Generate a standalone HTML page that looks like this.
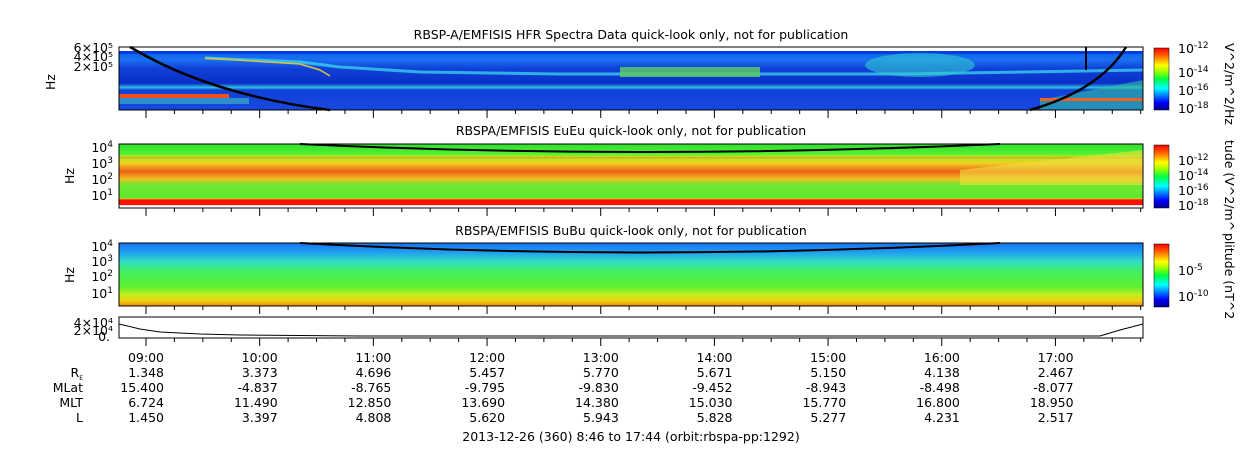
<!DOCTYPE html>
<html><head><meta charset="utf-8"><style>
body{margin:0;background:#fff;width:1250px;height:449px;overflow:hidden;font-family:"Liberation Sans","DejaVu Sans",sans-serif}
svg text{font-family:"DejaVu Sans","Liberation Sans",sans-serif;font-size:12.5px;fill:#000}
</style></head><body>
<svg id="s" width="1250" height="449" xmlns="http://www.w3.org/2000/svg">
<defs>
<linearGradient id="jet" x1="0" y1="1" x2="0" y2="0">
<stop offset="0" stop-color="#00008f"/><stop offset="0.12" stop-color="#0000ff"/><stop offset="0.35" stop-color="#00ffff"/><stop offset="0.5" stop-color="#00ff40"/><stop offset="0.62" stop-color="#a0ff00"/><stop offset="0.72" stop-color="#ffff00"/><stop offset="0.88" stop-color="#ff6000"/><stop offset="1" stop-color="#ff0000"/>
</linearGradient>
<linearGradient id="p1" x1="0" y1="0" x2="0" y2="1">
<stop offset="0" stop-color="#1060f0"/><stop offset="0.15" stop-color="#1870f0"/><stop offset="0.3" stop-color="#1040d8"/><stop offset="0.55" stop-color="#0a30c8"/><stop offset="0.62" stop-color="#30c0e0"/><stop offset="0.66" stop-color="#1040d8"/><stop offset="1" stop-color="#1848e0"/>
</linearGradient>
<linearGradient id="p2" x1="0" y1="0" x2="0" y2="1">
<stop offset="0" stop-color="#30e030"/><stop offset="0.15" stop-color="#50f030"/><stop offset="0.2" stop-color="#a0f020"/><stop offset="0.3" stop-color="#f0d020"/><stop offset="0.43" stop-color="#f06018"/><stop offset="0.55" stop-color="#f0c020"/><stop offset="0.63" stop-color="#70e830"/><stop offset="0.84" stop-color="#60e830"/><stop offset="0.86" stop-color="#f0c020"/><stop offset="0.87" stop-color="#ff1000"/><stop offset="0.95" stop-color="#ff1000"/><stop offset="0.96" stop-color="#ffffff"/><stop offset="1" stop-color="#ffffff"/>
</linearGradient>
<linearGradient id="p3" x1="0" y1="0" x2="0" y2="1">
<stop offset="0" stop-color="#1870f0"/><stop offset="0.15" stop-color="#20a0f0"/><stop offset="0.3" stop-color="#30e0c0"/><stop offset="0.45" stop-color="#40f060"/><stop offset="0.7" stop-color="#60f030"/><stop offset="0.82" stop-color="#c0f020"/><stop offset="0.92" stop-color="#f0d010"/><stop offset="1" stop-color="#f08010"/>
</linearGradient>
</defs>
<text x="631" y="39" text-anchor="middle">RBSP-A/EMFISIS  HFR Spectra Data quick-look only, not for publication</text>
<text x="631" y="135" text-anchor="middle">RBSPA/EMFISIS  EuEu quick-look only, not for publication</text>
<text x="631" y="235" text-anchor="middle">RBSPA/EMFISIS  BuBu quick-look only, not for publication</text>
<rect x="119" y="51" width="1024" height="59" fill="url(#p1)"/>
<rect x="119" y="51" width="1024" height="3" fill="#0040e0"/>
<path d="M205 58 L300 62 L340 67 L420 72 L560 74 L900 74 L1143 70" stroke="#40e0f0" stroke-width="3" fill="none" opacity=".7"/>
<path d="M205 58 L300 64 L320 70 L330 76" stroke="#e0c040" stroke-width="1.5" fill="none"/>
<rect x="620" y="67" width="140" height="10" fill="#60d060" opacity=".8"/>
<ellipse cx="920" cy="65" rx="55" ry="12" fill="#30c8d0" opacity=".6"/>
<rect x="119" y="94" width="110" height="4" fill="#f05020"/>
<rect x="119" y="98" width="130" height="6" fill="#40c0c0" opacity=".6"/>
<path d="M1040 100 L1143 80 L1143 110 L1040 110Z" fill="#30c0a0" opacity=".6"/>
<rect x="1040" y="98" width="103" height="3" fill="#f06020"/>
<path d="M130 47 Q210 95 330 110" stroke="#000" stroke-width="2.5" fill="none"/>
<path d="M1030 110 Q1100 90 1126 47" stroke="#000" stroke-width="2.5" fill="none"/>
<line x1="1086" y1="47" x2="1086" y2="70" stroke="#000" stroke-width="2"/>
<rect x="119" y="47" width="1024" height="63" fill="none" stroke="#000" stroke-width="1"/>
<text x="113" y="52" text-anchor="end" font-size="11">6×10⁵</text>
<text x="113" y="61" text-anchor="end" font-size="11">4×10⁵</text>
<text x="113" y="71" text-anchor="end" font-size="11">2×10⁵</text>
<text transform="translate(55,82) rotate(-90)" text-anchor="middle">Hz</text>
<rect x="119" y="144" width="1024" height="64" fill="url(#p2)"/>
<rect x="119" y="157" width="1024" height="1.5" fill="#f0a020"/>
<path d="M960 170 L1143 150 L1143 185 L960 185Z" fill="#f0e040" opacity=".6"/>
<path d="M300 144 Q640 160 1000 144" stroke="#000" stroke-width="2" fill="none"/>
<rect x="119" y="144" width="1024" height="64" fill="none" stroke="#000"/>
<text x="113" y="152" text-anchor="end">10<tspan font-size="9" dy="-5">4</tspan></text>
<text x="113" y="168" text-anchor="end">10<tspan font-size="9" dy="-5">3</tspan></text>
<text x="113" y="184" text-anchor="end">10<tspan font-size="9" dy="-5">2</tspan></text>
<text x="113" y="200" text-anchor="end">10<tspan font-size="9" dy="-5">1</tspan></text>
<text transform="translate(74,176) rotate(-90)" text-anchor="middle">Hz</text>
<rect x="119" y="243" width="1024" height="63" fill="url(#p3)"/>
<path d="M300 243 Q640 262 1000 243" stroke="#000" stroke-width="2" fill="none"/>
<rect x="119" y="243" width="1024" height="63" fill="none" stroke="#000"/>
<text x="113" y="251" text-anchor="end">10<tspan font-size="9" dy="-5">4</tspan></text>
<text x="113" y="266" text-anchor="end">10<tspan font-size="9" dy="-5">3</tspan></text>
<text x="113" y="281" text-anchor="end">10<tspan font-size="9" dy="-5">2</tspan></text>
<text x="113" y="298" text-anchor="end">10<tspan font-size="9" dy="-5">1</tspan></text>
<text transform="translate(74,275) rotate(-90)" text-anchor="middle">Hz</text>
<rect x="119" y="317" width="1024" height="21" fill="#fff" stroke="#000"/>
<path d="M119 324 L140 329 L160 332 L200 334 L240 335 L360 336 L1100 336 L1120 330 L1143 324" stroke="#000" fill="none"/>
<text x="113" y="327" text-anchor="end" font-size="11">4×10⁴</text>
<text x="113" y="335" text-anchor="end" font-size="11">2×10⁴</text>
<text x="110" y="341" text-anchor="end" font-size="11">0.</text>
<rect x="1154" y="48" width="15" height="62" fill="url(#jet)" stroke="#000" stroke-width=".5"/>
<rect x="1154" y="145" width="15" height="63" fill="url(#jet)" stroke="#000" stroke-width=".5"/>
<rect x="1154" y="244" width="15" height="63" fill="url(#jet)" stroke="#000" stroke-width=".5"/>
<g>
<text x="1178" y="53">10<tspan font-size="9" dy="-5">-12</tspan></text>
<text x="1178" y="77">10<tspan font-size="9" dy="-5">-14</tspan></text>
<text x="1178" y="95">10<tspan font-size="9" dy="-5">-16</tspan></text>
<text x="1178" y="113">10<tspan font-size="9" dy="-5">-18</tspan></text>
<text x="1178" y="165">10<tspan font-size="9" dy="-5">-12</tspan></text>
<text x="1178" y="180">10<tspan font-size="9" dy="-5">-14</tspan></text>
<text x="1178" y="195">10<tspan font-size="9" dy="-5">-16</tspan></text>
<text x="1178" y="210">10<tspan font-size="9" dy="-5">-18</tspan></text>
<text x="1178" y="275">10<tspan font-size="9" dy="-5">-5</tspan></text>
<text x="1178" y="301">10<tspan font-size="9" dy="-5">-10</tspan></text>
</g>
<text transform="translate(1225,43) rotate(90)">V^2/m^2/Hz</text>
<text transform="translate(1225,140) rotate(90)">tude (V^2/m^</text>
<text transform="translate(1225,233) rotate(90)">plitude (nT^2</text>
<g id="ticks" stroke="#000" stroke-width="1"></g>
<g id="lab"></g>
<text x="83" y="377" text-anchor="end">R<tspan font-size="6" dy="3">E</tspan></text>
<text x="83" y="392" text-anchor="end">MLat</text>
<text x="83" y="407" text-anchor="end">MLT</text>
<text x="83" y="422" text-anchor="end">L</text>
<text x="631" y="441" text-anchor="middle">2013-12-26 (360) 8:46 to 17:44 (orbit:rbspa-pp:1292)</text>
</svg>
<script>
var NS="http://www.w3.org/2000/svg",t=document.getElementById('ticks'),l=document.getElementById('lab');
function ln(x1,y1,x2,y2){var e=document.createElementNS(NS,'line');e.setAttribute('x1',x1);e.setAttribute('y1',y1);e.setAttribute('x2',x2);e.setAttribute('y2',y2);t.appendChild(e);}
var bottoms=[110,208,306,338];
for(var k=-1;k<40;k++){var x=146+k*28.42;if(x<119||x>1143)continue;var maj=((k%4)+4)%4==0;
bottoms.forEach(function(b){ln(x,b,x,b+(maj?8:4));});}
var rows=[["09:00","10:00","11:00","12:00","13:00","14:00","15:00","16:00","17:00"],
["1.348","3.373","4.696","5.457","5.770","5.671","5.150","4.138","2.467"],
["15.400","-4.837","-8.765","-9.795","-9.830","-9.452","-8.943","-8.498","-8.077"],
["6.724","11.490","12.850","13.690","14.380","15.030","15.770","16.800","18.950"],
["1.450","3.397","4.808","5.620","5.943","5.828","5.277","4.231","2.517"]];
rows.forEach(function(r,i){r.forEach(function(s,j){var e=document.createElementNS(NS,'text');e.setAttribute('x',164+j*113.7);e.setAttribute('y',362+i*15);e.setAttribute('text-anchor','end');e.textContent=s;l.appendChild(e);});});
</script>
</body></html>
